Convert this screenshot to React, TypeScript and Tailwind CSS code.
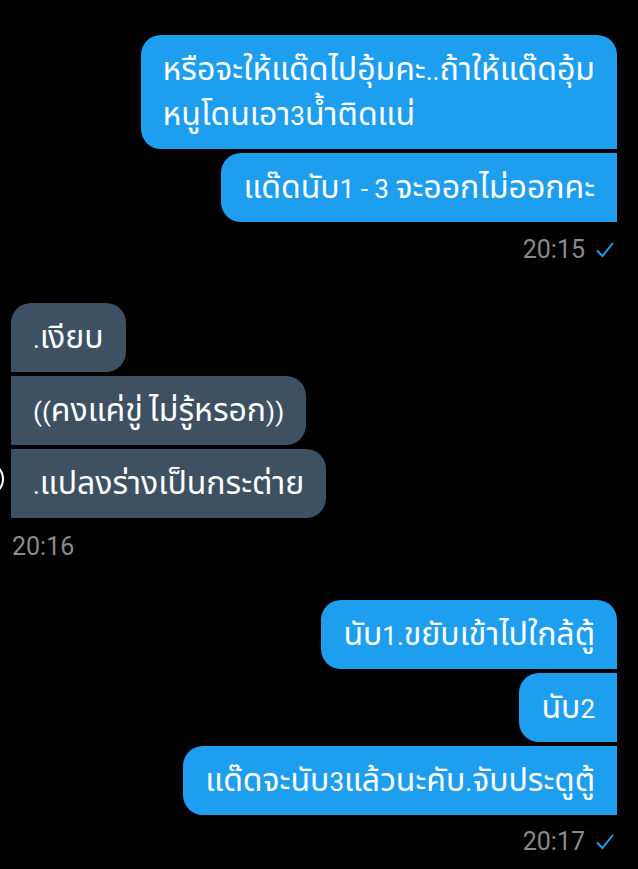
const FONT = { fontFamily: 'Roboto, "Noto Sans Thai", "Noto Sans", sans-serif' };

type Side = 'out' | 'in';
type Pos = 'first' | 'mid' | 'last';

// Thai glyphs in the screenshot run wider than the digits and dots, so the
// Latin runs get their own smaller size.
function Mixed({ text }: { text: string }) {
  const parts = text.split(/([0-9().\- ]+)/).filter(Boolean);
  return (
    <>
      {parts.map((p, i) =>
        /^[0-9().\- ]+$/.test(p) ? (
          <span key={i} className="text-[26px] leading-none">{p}</span>
        ) : (
          <span key={i}>{p}</span>
        )
      )}
    </>
  );
}

function Bubble({ side, lines, pos }: { side: Side; lines: string[]; pos: Pos }) {
  const color = side === 'out' ? 'bg-[#1e9eef]' : 'bg-[#3e5163]';
  let corners = 'rounded-[20px]';
  if (side === 'out') {
    if (pos === 'first') corners += ' rounded-br-none';
    else corners += ' rounded-tr-none rounded-br-none';
  } else {
    if (pos === 'first') corners += ' rounded-bl-none';
    else corners += ' rounded-tl-none rounded-bl-none';
  }
  return (
    <div className={`${color} ${corners} text-white px-[22px] py-[12px] text-[32px] leading-[45px] whitespace-nowrap`}>
      {lines.map((l, i) => (
        <div key={i} className="h-[45px]">
          <Mixed text={l} />
        </div>
      ))}
    </div>
  );
}

function Check() {
  return (
    <svg width="18" height="16" viewBox="0 0 18 16" fill="none">
      <path d="M1.5 9 L6.5 14 L16.5 1.5" stroke="#1e9eef" strokeWidth="2" strokeLinecap="round" strokeLinejoin="round" />
    </svg>
  );
}

function Time({ t, read }: { t: string; read?: boolean }) {
  return (
    <div className="flex items-center gap-[11px] text-[25px] leading-[30px] text-[#8a8a8a]">
      <span>{t}</span>
      {read && <Check />}
    </div>
  );
}

export default function App() {
  return (
    <div className="w-[638px] h-[869px] bg-black overflow-hidden" style={FONT}>
      <div className="flex flex-col pt-[35px]">
        {/* outgoing 1 */}
        <div className="flex flex-col items-end gap-[4px] pr-[21px]">
          <Bubble side="out" pos="first" lines={['หรือจะให้แด๊ดไปอุ้มคะ..ถ้าให้แด๊ดอุ้ม', 'หนูโดนเอา3น้ำติดแน่']} />
          <Bubble side="out" pos="last" lines={['แด๊ดนับ1 - 3 จะออกไม่ออกคะ']} />
        </div>
        <div className="flex justify-end pr-[24px] mt-[13px]">
          <Time t="20:15" read />
        </div>

        {/* incoming */}
        <div className="relative flex flex-col items-start gap-[4px] pl-[11px] mt-[38px]">
          <Bubble side="in" pos="first" lines={['.เงียบ']} />
          <Bubble side="in" pos="mid" lines={['((คงแค่ขู่ ไม่รู้หรอก))']} />
          <Bubble side="in" pos="last" lines={['.แปลงร่างเป็นกระต่าย']} />
          <div className="absolute left-[-30px] bottom-[22px] w-[34px] h-[34px] rounded-full border-[2px] border-white" />
        </div>
        <div className="flex pl-[12px] mt-[14px]">
          <Time t="20:16" />
        </div>

        {/* outgoing 2 */}
        <div className="flex flex-col items-end gap-[4px] pr-[21px] mt-[38px]">
          <Bubble side="out" pos="first" lines={['นับ1.ขยับเข้าไปใกล้ตู้']} />
          <Bubble side="out" pos="mid" lines={['นับ2']} />
          <Bubble side="out" pos="last" lines={['แด๊ดจะนับ3แล้วนะคับ.จับประตูตู้']} />
        </div>
        <div className="flex justify-end pr-[24px] mt-[12px]">
          <Time t="20:17" read />
        </div>
      </div>
    </div>
  );
}
